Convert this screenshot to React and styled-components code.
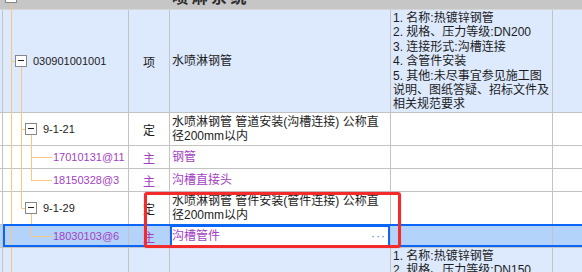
import styled, { createGlobalStyle } from "styled-components";

const GlobalStyle = createGlobalStyle`
  html, body { margin: 0; padding: 0; background: #ffffff; }
  body {
    font-family: "Liberation Sans", "Noto Sans CJK SC", sans-serif;
    font-size: 12px;
    color: #1c1c1c;
  }
`;

const LINE = "#c3c3c3";
const GUIDE = "#fbc684";
const PURPLE = "#a23fc2";
const BLUE = "#0a66f5";

const Grid = styled.div`
  position: relative;
  width: 582px;
  height: 272px;
  overflow: hidden;
`;

const Row = styled.div`
  position: relative;
  display: flex;
  box-sizing: border-box;
  height: ${({ $h }) => $h}px;
  background: ${({ $bg }) => $bg || "#ffffff"};
  border-bottom: 1px solid ${({ $group }) => ($group ? "#d6d6d6" : LINE)};

  ${({ $selected }) =>
    $selected &&
    `
    &::after {
      content: "";
      position: absolute;
      left: 3px;
      right: -4px;
      top: -1px;
      bottom: 0;
      border: 2px solid ${BLUE};
      pointer-events: none;
    }
  `}
`;

const Gutter = styled.div`
  flex: none;
  width: 3px;
  box-sizing: border-box;
  border-right: 1px solid ${({ $group }) => ($group ? "transparent" : LINE)};
`;

const CodeCell = styled.div`
  position: relative;
  flex: none;
  width: 126px;
  box-sizing: border-box;
  border-right: 1px solid ${({ $group }) => ($group ? "transparent" : LINE)};
  display: flex;
  align-items: ${({ $group }) => ($group ? "flex-end" : "center")};
  padding-left: ${({ $indent }) => $indent}px;
`;

const Toggle = styled.span`
  position: relative;
  flex: none;
  width: 12px;
  height: 12px;
  box-sizing: border-box;
  border: 1px solid #878787;
  background: #ffffff;
  margin-right: 6px;
  margin-bottom: ${({ $group }) => ($group ? "6px" : "0")};

  &::after {
    content: "";
    position: absolute;
    left: 2px;
    right: 2px;
    top: 4px;
    height: 1px;
    background: #222222;
  }
`;

const Code = styled.span`
  position: relative;
  font-size: 11px;
  white-space: nowrap;
  color: ${({ $main }) => ($main ? PURPLE : "#1c1c1c")};
`;

const TypeCell = styled.div`
  flex: none;
  width: 41px;
  box-sizing: border-box;
  border-right: 1px solid ${({ $group }) => ($group ? "transparent" : LINE)};
  display: flex;
  align-items: center;
  justify-content: center;
  color: ${({ $main }) => ($main ? PURPLE : "#1c1c1c")};
`;

const NameCell = styled.div`
  position: relative;
  flex: none;
  width: 221px;
  box-sizing: border-box;
  border-right: 1px solid ${({ $group }) => ($group ? "transparent" : LINE)};
  display: flex;
  align-items: ${({ $group }) => ($group ? "flex-end" : "center")};
  justify-content: space-between;
  padding: 0 4px 0 2px;
  line-height: 14px;
  white-space: pre-line;
  overflow: hidden;
  color: ${({ $main }) => ($main ? PURPLE : "#1c1c1c")};
  background: ${({ $editing }) => ($editing ? "#ffffff" : "transparent")};
  box-shadow: ${({ $editing }) => ($editing ? `inset 0 0 0 2px ${BLUE}` : "none")};
`;

const GroupTitle = styled.span`
  font-size: 16px;
  font-weight: bold;
  letter-spacing: 3.5px;
  line-height: 16px;
  margin-bottom: 3px;
  color: #2a2a2a;
`;

const Dots = styled.span`
  color: #4a86d6;
  letter-spacing: 1px;
  font-size: 12px;
`;

const FeatureCell = styled.div`
  flex: none;
  width: 162px;
  box-sizing: border-box;
  border-right: 1px solid ${({ $group }) => ($group ? "transparent" : LINE)};
  padding: 1px 2px 0 2px;
  line-height: 14.4px;
  white-space: pre-line;
  overflow: hidden;
`;

const RestCell = styled.div`
  flex: 1;
`;

const Lines = styled.svg`
  position: absolute;
  left: 0;
  top: 0;
  overflow: visible;
  pointer-events: none;
`;

const Annotation = styled.div`
  position: absolute;
  left: 144px;
  top: 192px;
  width: 257px;
  height: 56px;
  box-sizing: border-box;
  border: 3px solid #f42b2b;
  border-radius: 3px;
  box-shadow: 0 0 1px rgba(244, 43, 43, 0.7);
  pointer-events: none;
`;

// tree connectors of one row, x in cell coordinates
function Connectors({ h, full = [], half = [], down, from, branch }) {
  const mid = Math.floor((h - 1) / 2);
  return (
    <Lines width="126" height={h}>
      <g stroke={GUIDE} strokeWidth="1" shapeRendering="crispEdges">
        {full.map((x) => (
          <line key={"f" + x} x1={x + 0.5} x2={x + 0.5} y1="0" y2={h} />
        ))}
        {half.map((x) => (
          <line key={"h" + x} x1={x + 0.5} x2={x + 0.5} y1="0" y2={mid + 0.5} />
        ))}
        {down !== undefined && (
          <line x1={down + 0.5} x2={down + 0.5} y1={from !== undefined ? from : mid + 6} y2={h} />
        )}
        {branch && (
          <line x1={branch[0]} x2={branch[1]} y1={mid + 0.5} y2={mid + 0.5} />
        )}
      </g>
    </Lines>
  );
}

const rows = [
  {
    h: 103,
    bg: "#dde9fc",
    indent: 12,
    toggle: true,
    code: "030901001001",
    type: "项",
    name: "水喷淋钢管",
    features:
      "1. 名称:热镀锌钢管\n2. 规格、压力等级:DN200\n3. 连接形式:沟槽连接\n4. 含管件安装\n5. 其他:未尽事宜参见施工图\n说明、图纸答疑、招标文件及\n相关规范要求",
    lines: { full: [8], branch: [8, 12], down: 18 },
  },
  {
    h: 33,
    indent: 22,
    toggle: true,
    code: "9-1-21",
    type: "定",
    name: "水喷淋钢管 管道安装(沟槽连接) 公称直\n径200mm以内",
    lines: { full: [8, 18], branch: [18, 22], down: 28 },
  },
  {
    h: 23,
    indent: 50,
    main: true,
    code: "17010131@11",
    type: "主",
    name: "钢管",
    lines: { full: [8, 18, 28], branch: [28, 49] },
  },
  {
    h: 23,
    indent: 50,
    main: true,
    code: "18150328@3",
    type: "主",
    name: "沟槽直接头",
    lines: { full: [8, 18], half: [28], branch: [28, 49] },
  },
  {
    h: 33,
    indent: 22,
    toggle: true,
    code: "9-1-29",
    type: "定",
    name: "水喷淋钢管 管件安装(管件连接) 公称直\n径200mm以内",
    lines: { full: [8], half: [18], branch: [18, 22], down: 28 },
  },
  {
    h: 23,
    bg: "#b4d3fb",
    indent: 50,
    main: true,
    selected: true,
    code: "18030103@6",
    type: "主",
    name: "沟槽管件",
    lines: { full: [8], half: [28], branch: [28, 49] },
  },
  {
    h: 80,
    bg: "#dde9fc",
    indent: 50,
    code: "",
    type: "",
    name: "",
    features: "1. 名称:热镀锌钢管\n2. 规格、压力等级:DN150\n3. 连接形式:沟槽连接",
    lines: { full: [8] },
  },
];

function GroupRow() {
  return (
    <Row $h={10} $bg="#c6c6c6" $group>
      <Gutter $group />
      <CodeCell $group $indent={2}>
        <Connectors h={10} down={8} from={3} />
        <Toggle $group />
      </CodeCell>
      <TypeCell $group />
      <NameCell $group>
        <GroupTitle>喷淋系统</GroupTitle>
      </NameCell>
      <FeatureCell $group />
      <RestCell />
    </Row>
  );
}

function ItemRow({ row }) {
  return (
    <Row $h={row.h} $bg={row.bg} $selected={row.selected}>
      <Gutter />
      <CodeCell $indent={row.indent}>
        <Connectors h={row.h} {...row.lines} />
        {row.toggle && <Toggle />}
        <Code $main={row.main}>{row.code}</Code>
      </CodeCell>
      <TypeCell $main={row.main}>{row.type}</TypeCell>
      <NameCell $main={row.main} $editing={row.selected}>
        <span>{row.name}</span>
        {row.selected && <Dots>···</Dots>}
      </NameCell>
      <FeatureCell>{row.features}</FeatureCell>
      <RestCell />
    </Row>
  );
}

export default function App() {
  return (
    <>
      <GlobalStyle />
      <Grid>
        <GroupRow />
        {rows.map((row, i) => (
          <ItemRow key={i} row={row} />
        ))}
        <Annotation />
      </Grid>
    </>
  );
}
